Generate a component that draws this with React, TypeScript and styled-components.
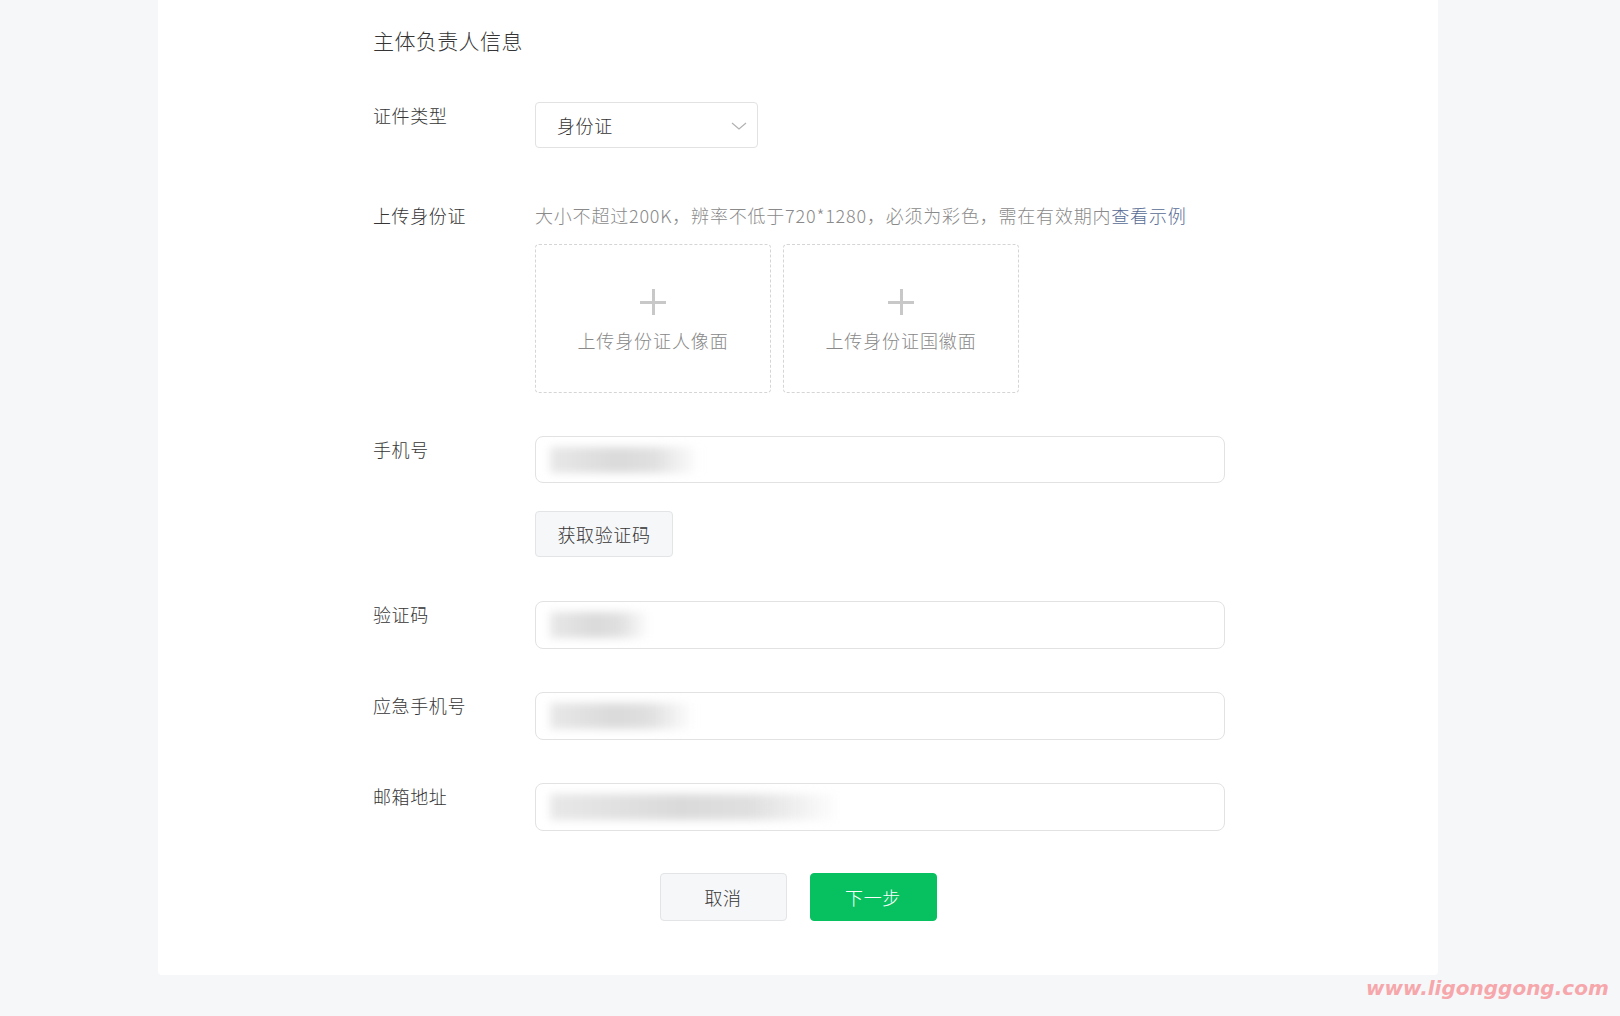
import React, { useState } from 'react';
import styled, { createGlobalStyle } from 'styled-components';

const GlobalStyle = createGlobalStyle`
	html, body {
		margin: 0;
		padding: 0;
		background-color: #f6f7f9;
		font-family: "Microsoft YaHei", "Noto Sans CJK SC", "Noto Sans", sans-serif;
		font-weight: 300;
	}
	* {
		box-sizing: border-box;
	}
`;

const App: React.FunctionComponent = () => {
	const [docType] = useState<string>('身份证');

	return (
		<Page>
			<GlobalStyle />
			<Card>
				<Title>主体负责人信息</Title>

				<Row $top={47}>
					<Label>证件类型</Label>
					<Field>
						<Select>
							<span>{docType}</span>
							<Chevron viewBox="0 0 16 8">
								<path d="M1 1 L8 7 L15 1" />
							</Chevron>
						</Select>
					</Field>
				</Row>

				<Row $top={54}>
					<Label>上传身份证</Label>
					<Field>
						<Hint>
							大小不超过200K，辨率不低于720*1280，必须为彩色，需在有效期内<HintLink>查看示例</HintLink>
						</Hint>
						<UploadList>
							<UploadBox>
								<Plus />
								<UploadText>上传身份证人像面</UploadText>
							</UploadBox>
							<UploadBox>
								<Plus />
								<UploadText>上传身份证国徽面</UploadText>
							</UploadBox>
						</UploadList>
					</Field>
				</Row>

				<Row $top={43}>
					<Label>手机号</Label>
					<Field>
						<TextBox $height={47}>
							<Blurred $width={150} />
						</TextBox>
						<CodeButton>获取验证码</CodeButton>
					</Field>
				</Row>

				<Row $top={44}>
					<Label>验证码</Label>
					<Field>
						<TextBox>
							<Blurred $width={100} />
						</TextBox>
					</Field>
				</Row>

				<Row $top={43}>
					<Label>应急手机号</Label>
					<Field>
						<TextBox>
							<Blurred $width={144} />
						</TextBox>
					</Field>
				</Row>

				<Row $top={43}>
					<Label>邮箱地址</Label>
					<Field>
						<TextBox>
							<Blurred $width={290} />
						</TextBox>
					</Field>
				</Row>

				<Actions>
					<Button>取消</Button>
					<Button $primary>下一步</Button>
				</Actions>
			</Card>
			<Watermark>www.ligonggong.com</Watermark>
		</Page>
	);
};

const Page = styled.div`
	position: relative;
	width: 1620px;
	height: 1016px;
	overflow: hidden;
	background-color: #f6f7f9;
`;

const Card = styled.section`
	margin-left: 158px;
	width: 1280px;
	height: 975px;
	padding: 26px 213px 0 215px;
	background-color: #ffffff;
	border-radius: 0 0 4px 4px;
`;

const Title = styled.h2`
	margin: 0;
	font-size: 21px;
	line-height: 29px;
	font-weight: 300;
	letter-spacing: 0.4px;
	color: #353535;
`;

const Row = styled.div<{ $top: number }>`
	display: flex;
	align-items: flex-start;
	margin-top: ${props => props.$top}px;
`;

const Label = styled.label`
	flex: 0 0 162px;
	font-size: 18px;
	line-height: 26px;
	letter-spacing: 0.6px;
	color: #353535;
`;

const Field = styled.div`
	display: flex;
	flex-direction: column;
	align-items: flex-start;
	flex: 0 0 690px;
`;

/* ************** Select ************** */
const Select = styled.div`
	display: flex;
	align-items: center;
	justify-content: space-between;
	width: 223px;
	height: 46px;
	padding: 0 10px 0 21px;
	border: 1px solid #e2e2e2;
	border-radius: 4px;
	font-size: 18px;
	letter-spacing: 0.6px;
	color: #353535;
	cursor: pointer;
`;

const Chevron = styled.svg`
	width: 16px;
	height: 8px;
	fill: none;
	stroke: #b2b2b2;
	stroke-width: 1.2;
	margin-top: 2px;
`;

/* ************** Upload ************** */
const Hint = styled.p`
	margin: 0 0 16px 0;
	font-size: 18px;
	line-height: 26px;
	letter-spacing: 0.8px;
	color: #8a8a8a;
	white-space: nowrap;
`;

const HintLink = styled.a`
	color: #576b95;
	cursor: pointer;
`;

const UploadList = styled.div`
	display: flex;
	gap: 12px;
`;

const UploadBox = styled.div`
	display: flex;
	flex-direction: column;
	align-items: center;
	justify-content: center;
	width: 236px;
	height: 149px;
	padding-top: 4px;
	border: 1px dashed #d5d5d5;
	border-radius: 4px;
	cursor: pointer;
`;

const Plus = styled.span`
	position: relative;
	width: 26px;
	height: 26px;
	margin-bottom: 12px;
	&::before,
	&::after {
		content: '';
		position: absolute;
		background-color: #c8c8c8;
	}
	&::before {
		left: 0;
		top: 12px;
		width: 26px;
		height: 3px;
	}
	&::after {
		left: 12px;
		top: 0;
		width: 3px;
		height: 26px;
	}
`;

const UploadText = styled.span`
	font-size: 18px;
	line-height: 26px;
	letter-spacing: 0.9px;
	color: #888888;
`;

/* ************** Inputs ************** */
const TextBox = styled.div<{ $height?: number }>`
	display: flex;
	align-items: center;
	width: 690px;
	height: ${props => props.$height ?? 48}px;
	padding: 0 14px;
	border: 1px solid #e2e2e2;
	border-radius: 8px;
	background-color: #ffffff;
	overflow: hidden;
`;

const Blurred = styled.span<{ $width: number }>`
	display: block;
	width: ${props => props.$width}px;
	height: 26px;
	background: linear-gradient(90deg, #e8e8e8 0%, #dadada 45%, #e0e0e0 70%, rgba(240, 240, 240, 0) 100%);
	filter: blur(4px);
`;

const CodeButton = styled.button`
	margin-top: 28px;
	width: 138px;
	height: 46px;
	border: 1px solid #e3e4e6;
	border-radius: 4px;
	background-color: #f6f7f9;
	font-family: inherit;
	font-weight: 300;
	font-size: 18px;
	letter-spacing: 0.6px;
	color: #353535;
	cursor: pointer;
`;

/* ************** Actions ************** */
const Actions = styled.div`
	display: flex;
	justify-content: center;
	gap: 23px;
	margin-top: 42px;
	padding-right: 2px;
`;

const Button = styled.button<{ $primary?: boolean }>`
	width: 127px;
	height: 48px;
	border: 1px solid ${props => (props.$primary ? '#07c160' : '#e3e4e6')};
	border-radius: 4px;
	background-color: ${props => (props.$primary ? '#07c160' : '#f6f7f9')};
	font-family: inherit;
	font-weight: 300;
	font-size: 18px;
	letter-spacing: 0.6px;
	color: ${props => (props.$primary ? '#ffffff' : '#353535')};
	cursor: pointer;
`;

const Watermark = styled.div`
	position: absolute;
	left: 1366px;
	top: 976px;
	font-family: "DejaVu Sans", sans-serif;
	font-size: 20px;
	font-weight: 700;
	font-style: italic;
	color: #f6a7ab;
`;

export default App;
